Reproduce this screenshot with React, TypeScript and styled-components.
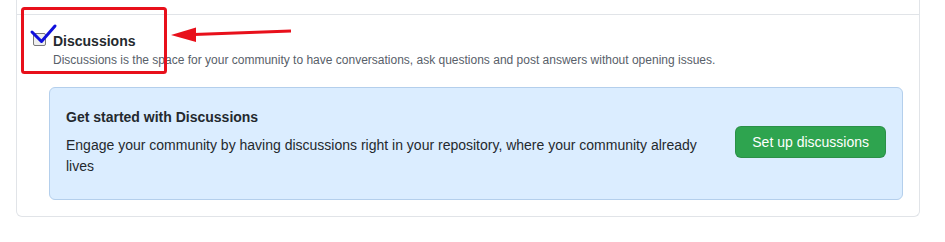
import React from "react";
import styled, { createGlobalStyle } from "styled-components";

const GlobalStyle = createGlobalStyle`
  html, body {
    margin: 0;
    padding: 0;
    background: #ffffff;
  }
  body {
    font-family: "Liberation Sans", Arial, sans-serif;
    color: #24292e;
    -webkit-font-smoothing: antialiased;
  }
`;

const Page = styled.div`
  position: relative;
  width: 945px;
  height: 242px;
  box-sizing: border-box;
  padding-left: 16px;
  overflow: hidden;
`;

const Box = styled.div`
  width: 904px;
  box-sizing: border-box;
  border: 1px solid #e1e4e8;
  border-top: none;
  border-radius: 0 0 6px 6px;
  background: #ffffff;
`;

const PrevRow = styled.div`
  height: 14px;
  border-bottom: 1px solid #e1e4e8;
`;

const Row = styled.div`
  padding: 16px;
`;

const CheckLine = styled.label`
  display: flex;
  align-items: flex-start;
  gap: 7px;
  font-size: 14px;
  line-height: 20px;
  font-weight: 700;
  color: #24292e;
`;

const CheckBox = styled.span`
  display: block;
  width: 13px;
  height: 13px;
  margin-top: 2px;
  box-sizing: border-box;
  border: 1px solid #7a7a7a;
  border-radius: 2px;
  background: #eeeeee;
`;

const Note = styled.p`
  margin: 0;
  padding-left: 20px;
  font-size: 12px;
  line-height: 18px;
  color: #586069;
`;

const Flash = styled.div`
  display: flex;
  align-items: center;
  gap: 16px;
  margin: 18px 0 0 16px;
  padding: 19px 16px 22px;
  border: 1px solid #b4cfec;
  border-radius: 6px;
  background: #dbedff;
`;

const FlashBody = styled.div`
  flex: 1;
`;

const FlashTitle = styled.h3`
  margin: 0 0 7px;
  font-size: 14px;
  line-height: 21px;
  font-weight: 700;
  color: #24292e;
`;

const FlashText = styled.p`
  margin: 0;
  font-size: 14px;
  line-height: 21px;
  color: #24292e;
`;

const Button = styled.button`
  flex: none;
  padding: 5px 16px;
  font-family: inherit;
  font-size: 14px;
  line-height: 20px;
  color: #ffffff;
  background: #2ea44f;
  border: 1px solid rgba(27, 31, 35, 0.15);
  border-radius: 6px;
  cursor: pointer;
`;

const Overlay = styled.svg`
  position: absolute;
  top: 0;
  left: 0;
  pointer-events: none;
`;

const Annotations: React.FC = () => (
  <Overlay width={945} height={242} viewBox="0 0 945 242">
    <rect
      x={22.5}
      y={8.5}
      width={143}
      height={64}
      rx={2}
      fill="none"
      stroke="#e8101b"
      strokeWidth={3}
    />
    <line x1={291} y1={31} x2={194} y2={34.5} stroke="#e8101b" strokeWidth={3} />
    <polygon points="171,35 196,27.5 196,42" fill="#e8101b" />
    <polyline
      points="32,32 41.5,41.5 55,26"
      fill="none"
      stroke="#1010dc"
      strokeWidth={3}
      strokeLinecap="round"
      strokeLinejoin="round"
    />
  </Overlay>
);

export default function App() {
  return (
    <Page>
      <GlobalStyle />
      <Box>
        <PrevRow />
        <Row>
          <CheckLine>
            <CheckBox />
            Discussions
          </CheckLine>
          <Note>
            Discussions is the space for your community to have conversations,
            ask questions and post answers without opening issues.
          </Note>
          <Flash>
            <FlashBody>
              <FlashTitle>Get started with Discussions</FlashTitle>
              <FlashText>
                Engage your community by having discussions right in your
                repository, where your community already lives
              </FlashText>
            </FlashBody>
            <Button>Set up discussions</Button>
          </Flash>
        </Row>
      </Box>
      <Annotations />
    </Page>
  );
}
